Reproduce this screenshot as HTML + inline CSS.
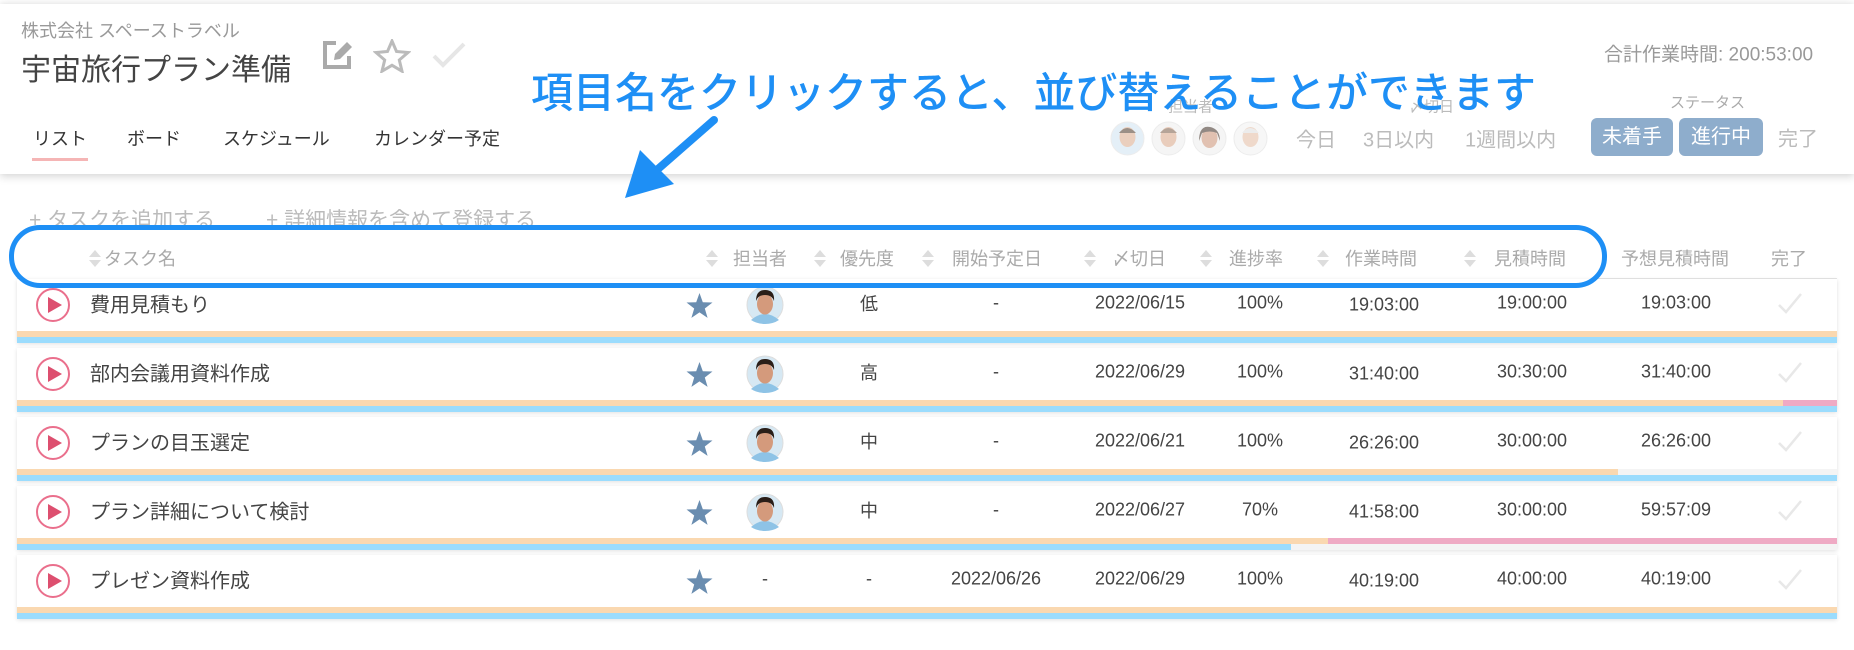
<!DOCTYPE html>
<html><head><meta charset="utf-8"><style>
*{margin:0;padding:0;box-sizing:border-box}
body{width:1854px;height:650px;background:#fff;position:relative;overflow:hidden;font-family:"Liberation Sans","Noto Sans CJK JP",sans-serif;color:#444}
.a{position:absolute;white-space:nowrap}
.vc{transform:translateY(-50%)}
.panel{position:absolute;left:0;top:4px;width:1854px;height:170px;background:#fff;box-shadow:0 3px 8px rgba(0,0,0,0.15),0 -2px 6px rgba(0,0,0,0.06)}
.hd{color:#aaa;font-size:18px}
.card{position:absolute;left:17px;width:1820px;height:64px;background:#fff;box-shadow:0 1px 4px rgba(0,0,0,0.12)}
.bar{position:absolute;left:0;width:100%}
.v{font-size:18px;color:#444;text-align:center}
</style></head><body>
<div class="panel"></div>
<div class="a vc" style="left:21px;top:30px;font-size:18px;color:#999">株式会社 スペーストラベル</div>
<div class="a vc" style="left:21px;top:67px;font-size:30px;color:#444">宇宙旅行プラン準備</div>
<svg class="a" style="left:322px;top:38px" width="34" height="32" viewBox="0 0 34 32"><path d="M14 5H3v24h24V18" fill="none" stroke="#aaa" stroke-width="4"/><path d="M12 22l1-6L25 4l5 5-12 12z" fill="#aaa"/></svg>
<svg class="a" style="left:373px;top:39px" width="38" height="34" viewBox="0 0 38 34"><path d="M19 2l4.5 10.5 11.5 1-8.7 7.5 2.7 11.2L19 26.3 9 32.2l2.7-11.2L3 13.5l11.5-1z" fill="none" stroke="#bbb" stroke-width="3"/></svg>
<svg class="a" style="left:432px;top:42px" width="34" height="26" viewBox="0 0 34 26"><path d="M2 14l9 9L32 2" fill="none" stroke="#e6e6e6" stroke-width="4"/></svg>
<div class="a vc" style="left:33px;top:138px;font-size:18px;color:#333">リスト</div>
<div class="a" style="left:32px;top:158px;width:56px;height:3px;background:#f5b5b5"></div>
<div class="a vc" style="left:127px;top:138px;font-size:18px;color:#333">ボード</div>
<div class="a vc" style="left:223px;top:138px;font-size:18px;color:#333">スケジュール</div>
<div class="a vc" style="left:374px;top:138px;font-size:18px;color:#333">カレンダー予定</div>
<div class="a vc" style="left:1604px;top:53px;font-size:19px;color:#999">合計作業時間: 200:53:00</div>
<div class="a vc" style="left:1670px;top:102px;font-size:15px;color:#aaa">ステータス</div>
<div class="a vc" style="left:1168px;top:106px;font-size:15px;color:#bbb">担当者</div>
<div class="a vc" style="left:1409px;top:106px;font-size:15px;color:#bbb">〆切日</div>
<div class="a vc" style="left:1296px;top:138px;font-size:20px;color:#bbb">今日</div>
<div class="a vc" style="left:1363px;top:138px;font-size:20px;color:#bbb">3日以内</div>
<div class="a vc" style="left:1465px;top:138px;font-size:20px;color:#bbb">1週間以内</div>
<div class="a" style="left:1591px;top:118px;width:82px;height:38px;border-radius:6px;background:#8eadcc;color:#fff;font-size:20px;line-height:38px;text-align:center">未着手</div>
<div class="a" style="left:1679px;top:118px;width:84px;height:38px;border-radius:6px;background:#8eadcc;color:#fff;font-size:20px;line-height:38px;text-align:center">進行中</div>
<div class="a vc" style="left:1778px;top:137px;font-size:20px;color:#bbb">完了</div>
<svg class="a" style="left:1110px;top:121px;opacity:0.55" width="162" height="35" viewBox="0 0 162 35">
<g><circle cx="17.5" cy="17.5" r="16.5" fill="#cfe3f2" stroke="#ddd"/><ellipse cx="17.5" cy="16" rx="8" ry="10" fill="#d9a88a"/><path d="M9 12q8-10 17 0" fill="#4a3424"/></g>
<g transform="translate(41,0)"><circle cx="17.5" cy="17.5" r="16.5" fill="#eee" stroke="#ddd"/><ellipse cx="17.5" cy="16" rx="8" ry="10" fill="#d8a587"/><path d="M9 12q8-10 17 0" fill="#7a5a44"/></g>
<g transform="translate(82,0)"><circle cx="17.5" cy="17.5" r="16.5" fill="#eee" stroke="#ddd"/><ellipse cx="17.5" cy="17" rx="8" ry="10" fill="#c98f72"/><path d="M7 20q0-16 11-14q10 2 10 14l-3-8q-7 -3-15 0z" fill="#3a2a20"/></g>
<g transform="translate(123,0)"><circle cx="17.5" cy="17.5" r="16.5" fill="#f2f2f2" stroke="#ddd"/><ellipse cx="17.5" cy="16" rx="8" ry="10" fill="#e2bba2"/><path d="M9 12q8-10 17 0" fill="#ddd"/></g>
</svg>
<div class="a vc" style="left:29px;top:219px;font-size:21px;color:#bbb">+ タスクを追加する</div>
<div class="a vc" style="left:266px;top:219px;font-size:21px;color:#bbb">+ 詳細情報を含めて登録する</div>
<!-- header -->
<div class="a" style="left:17px;top:278px;width:1820px;height:1px;background:#e6e6e6"></div>
<svg width="0" height="0" style="position:absolute"><defs><g id="s"><path d="M0 7L6 0L12 7z M0 10L12 10L6 17z" fill="#ddd"/></g></defs></svg>
<div class="a" style="left:9px;top:230px;width:1598px;height:54px;background:#fff;border-radius:28px"></div>
<svg class="a" style="left:89px;top:250px" width="12" height="17"><use href="#s"/></svg>
<div class="a vc hd" style="left:104px;top:258px">タスク名</div>
<svg class="a" style="left:706px;top:250px" width="12" height="17"><use href="#s"/></svg>
<div class="a vc hd" style="left:733px;top:258px">担当者</div>
<svg class="a" style="left:814px;top:250px" width="12" height="17"><use href="#s"/></svg>
<div class="a vc hd" style="left:840px;top:258px">優先度</div>
<svg class="a" style="left:922px;top:250px" width="12" height="17"><use href="#s"/></svg>
<div class="a vc hd" style="left:952px;top:258px">開始予定日</div>
<svg class="a" style="left:1084px;top:250px" width="12" height="17"><use href="#s"/></svg>
<div class="a vc hd" style="left:1112px;top:258px">〆切日</div>
<svg class="a" style="left:1200px;top:250px" width="12" height="17"><use href="#s"/></svg>
<div class="a vc hd" style="left:1229px;top:258px">進捗率</div>
<svg class="a" style="left:1317px;top:250px" width="12" height="17"><use href="#s"/></svg>
<div class="a vc hd" style="left:1345px;top:258px">作業時間</div>
<svg class="a" style="left:1464px;top:250px" width="12" height="17"><use href="#s"/></svg>
<div class="a vc hd" style="left:1494px;top:258px">見積時間</div>
<div class="a vc hd" style="left:1621px;top:258px">予想見積時間</div>
<div class="a vc hd" style="left:1771px;top:258px">完了</div>

<svg width="0" height="0" style="position:absolute"><defs>
<g id="play"><circle cx="17" cy="17" r="16" fill="#fff" stroke="#ea6f8c" stroke-width="2"/><path d="M12 9L26 17L12 25z" fill="#dd4f6f"/></g>
<g id="star"><path d="M13.5 1l3.3 9.2 9.7 0.3-7.7 6 2.8 9.4-8.1-5.5-8.1 5.5 2.8-9.4-7.7-6 9.7-0.3z" fill="#6a8db0"/></g>
<g id="av"><circle cx="19" cy="19" r="18" fill="#d6e8f3" stroke="#ddd"/><path d="M5 34q14-12 28 0q-6 4-14 4q-8 0-14-4z" fill="#8ec3e6"/><ellipse cx="19" cy="18" rx="8" ry="10.5" fill="#d49a7c"/><path d="M10 15q0-11 9-11q10 0 9 11q-2-6-9-6q-7 0-9 6z" fill="#2a1e18"/></g>
<g id="ck"><path d="M2 13l7 7L24 2" fill="none" stroke="#e8e8e8" stroke-width="2.5"/></g>
</defs></svg>

<div class="card" style="top:279px"><div class="bar" style="top:52px;height:6px;background:#fad8b0"></div><div class="bar" style="top:58px;height:6px;background:#9bdcfd"></div></div>
<div class="card" style="top:348px"><div class="bar" style="top:52px;height:6px;background:linear-gradient(90deg,#fad8b0 0,#fad8b0 1766px,#efaac4 1766px)"></div><div class="bar" style="top:58px;height:6px;background:#9bdcfd"></div></div>
<div class="card" style="top:417px"><div class="bar" style="top:52px;height:6px;background:linear-gradient(90deg,#fad8b0 0,#fad8b0 1601px,#f4f4f4 1601px)"></div><div class="bar" style="top:58px;height:6px;background:#9bdcfd"></div></div>
<div class="card" style="top:486px"><div class="bar" style="top:52px;height:6px;background:linear-gradient(90deg,#fad8b0 0,#fad8b0 1311px,#efaac4 1311px)"></div><div class="bar" style="top:58px;height:6px;background:linear-gradient(90deg,#9bdcfd 0,#9bdcfd 1274px,#f4f4f4 1274px)"></div></div>
<div class="card" style="top:555px"><div class="bar" style="top:52px;height:6px;background:#fad8b0"></div><div class="bar" style="top:58px;height:6px;background:#9bdcfd"></div></div>

<svg class="a" style="left:36px;top:288px" width="34" height="34"><use href="#play"/></svg>
<div class="a vc" style="left:90px;top:303px;font-size:20px">費用見積もり</div>
<svg class="a" style="left:686px;top:292px" width="27" height="27"><use href="#star"/></svg>
<svg class="a" style="left:746px;top:286px" width="38" height="38"><use href="#av"/></svg>
<div class="a vc v" style="left:859px;top:303px;width:20px">低</div>
<div class="a vc v" style="left:986px;top:303px;width:20px">-</div>
<div class="a vc v" style="left:1080px;top:303px;width:120px">2022/06/15</div>
<div class="a vc v" style="left:1220px;top:303px;width:80px">100%</div>
<div class="a vc v" style="left:1334px;top:305px;width:100px">19:03:00</div>
<div class="a vc v" style="left:1482px;top:303px;width:100px">19:00:00</div>
<div class="a vc v" style="left:1626px;top:303px;width:100px">19:03:00</div>
<svg class="a" style="left:1777px;top:292px" width="26" height="24"><use href="#ck"/></svg>

<svg class="a" style="left:36px;top:357px" width="34" height="34"><use href="#play"/></svg>
<div class="a vc" style="left:90px;top:372px;font-size:20px">部内会議用資料作成</div>
<svg class="a" style="left:686px;top:361px" width="27" height="27"><use href="#star"/></svg>
<svg class="a" style="left:746px;top:355px" width="38" height="38"><use href="#av"/></svg>
<div class="a vc v" style="left:859px;top:372px;width:20px">高</div>
<div class="a vc v" style="left:986px;top:372px;width:20px">-</div>
<div class="a vc v" style="left:1080px;top:372px;width:120px">2022/06/29</div>
<div class="a vc v" style="left:1220px;top:372px;width:80px">100%</div>
<div class="a vc v" style="left:1334px;top:374px;width:100px">31:40:00</div>
<div class="a vc v" style="left:1482px;top:372px;width:100px">30:30:00</div>
<div class="a vc v" style="left:1626px;top:372px;width:100px">31:40:00</div>
<svg class="a" style="left:1777px;top:361px" width="26" height="24"><use href="#ck"/></svg>

<svg class="a" style="left:36px;top:426px" width="34" height="34"><use href="#play"/></svg>
<div class="a vc" style="left:90px;top:441px;font-size:20px">プランの目玉選定</div>
<svg class="a" style="left:686px;top:430px" width="27" height="27"><use href="#star"/></svg>
<svg class="a" style="left:746px;top:424px" width="38" height="38"><use href="#av"/></svg>
<div class="a vc v" style="left:859px;top:441px;width:20px">中</div>
<div class="a vc v" style="left:986px;top:441px;width:20px">-</div>
<div class="a vc v" style="left:1080px;top:441px;width:120px">2022/06/21</div>
<div class="a vc v" style="left:1220px;top:441px;width:80px">100%</div>
<div class="a vc v" style="left:1334px;top:443px;width:100px">26:26:00</div>
<div class="a vc v" style="left:1482px;top:441px;width:100px">30:00:00</div>
<div class="a vc v" style="left:1626px;top:441px;width:100px">26:26:00</div>
<svg class="a" style="left:1777px;top:430px" width="26" height="24"><use href="#ck"/></svg>

<svg class="a" style="left:36px;top:495px" width="34" height="34"><use href="#play"/></svg>
<div class="a vc" style="left:90px;top:510px;font-size:20px">プラン詳細について検討</div>
<svg class="a" style="left:686px;top:499px" width="27" height="27"><use href="#star"/></svg>
<svg class="a" style="left:746px;top:493px" width="38" height="38"><use href="#av"/></svg>
<div class="a vc v" style="left:859px;top:510px;width:20px">中</div>
<div class="a vc v" style="left:986px;top:510px;width:20px">-</div>
<div class="a vc v" style="left:1080px;top:510px;width:120px">2022/06/27</div>
<div class="a vc v" style="left:1220px;top:510px;width:80px">70%</div>
<div class="a vc v" style="left:1334px;top:512px;width:100px">41:58:00</div>
<div class="a vc v" style="left:1482px;top:510px;width:100px">30:00:00</div>
<div class="a vc v" style="left:1626px;top:510px;width:100px">59:57:09</div>
<svg class="a" style="left:1777px;top:499px" width="26" height="24"><use href="#ck"/></svg>

<svg class="a" style="left:36px;top:564px" width="34" height="34"><use href="#play"/></svg>
<div class="a vc" style="left:90px;top:579px;font-size:20px">プレゼン資料作成</div>
<svg class="a" style="left:686px;top:568px" width="27" height="27"><use href="#star"/></svg>
<div class="a vc v" style="left:755px;top:579px;width:20px">-</div>
<div class="a vc v" style="left:859px;top:579px;width:20px">-</div>
<div class="a vc v" style="left:936px;top:579px;width:120px">2022/06/26</div>
<div class="a vc v" style="left:1080px;top:579px;width:120px">2022/06/29</div>
<div class="a vc v" style="left:1220px;top:579px;width:80px">100%</div>
<div class="a vc v" style="left:1334px;top:581px;width:100px">40:19:00</div>
<div class="a vc v" style="left:1482px;top:579px;width:100px">40:00:00</div>
<div class="a vc v" style="left:1626px;top:579px;width:100px">40:19:00</div>
<svg class="a" style="left:1777px;top:568px" width="26" height="24"><use href="#ck"/></svg>

<div class="a" style="left:9px;top:225px;width:1598px;height:63px;border:5px solid #1e8ff5;border-radius:31px"></div>
<div class="a vc" style="left:531px;top:90px;font-size:42px;color:#1e8ff5;font-weight:500">項目名をクリックすると、並び替えることができます</div>
<svg class="a" style="left:600px;top:105px" width="130" height="110" viewBox="600 105 130 110"><path d="M714 120L650 176" stroke="#1e8ff5" stroke-width="8" stroke-linecap="round"/><path d="M625 198L640 150L674 184z" fill="#1e8ff5"/></svg>
</body></html>
